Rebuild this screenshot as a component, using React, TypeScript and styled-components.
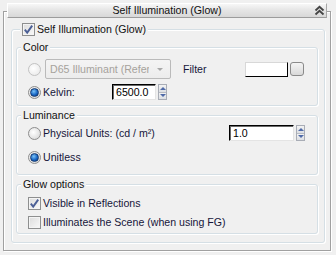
import styled, { createGlobalStyle } from "styled-components";

const GlobalStyle = createGlobalStyle`
  html, body {
    margin: 0;
    padding: 0;
    background: #f0f0f0;
  }
  body {
    font-family: "Liberation Sans", Arial, sans-serif;
    font-size: 10.6px;
    color: #16163a;
  }
  * {
    box-sizing: border-box;
  }
`;

const Page = styled.div`
  width: 336px;
  height: 255px;
  padding-top: 3px;
  overflow: hidden;
  background: #f0f0f0;
`;

const TitleBar = styled.div`
  position: relative;
  z-index: 1;
  height: 15px;
  margin: 0 9px 0 7px;
  display: grid;
  grid-template-columns: 1fr auto 1fr;
  align-items: center;
  background: linear-gradient(#f7f7f7, #e6e6e6 45%, #d8d8d8);
  border: 1px solid;
  border-color: #ffffff #a8a8a8 #9c9c9c #ffffff;
  line-height: 13px;
  color: #111;
`;

const TitleText = styled.span`
  grid-column: 2;
`;

const Chevron = styled.svg`
  grid-column: 3;
  justify-self: end;
  margin-right: 1px;
`;

const Frame = styled.div`
  margin: -7px 5px 0 3px;
  border: 1px solid #a0a0a0;
  box-shadow: inset 1px 1px 0 #ffffff, 1px 1px 0 #ffffff;
  padding: 11px 5px 7px 7px;
`;

const GroupBox = styled.fieldset<{ $pad: string }>`
  margin: 0;
  min-width: 0;
  border: 1px solid #d5dfe5;
  border-radius: 3px;
  box-shadow: inset 1px 1px 0 #ffffff, 1px 1px 0 #ffffff;
  padding: ${(p) => p.$pad};
`;

const Legend = styled.legend<{ $offset: number }>`
  margin-left: ${(p) => p.$offset}px;
  padding: 0 2px;
  height: 13px;
  line-height: 13px;
  display: flex;
  align-items: center;
  background: #f0f0f0;
  color: #111;
`;

const Stack = styled.div`
  display: flex;
  flex-direction: column;
  gap: 3px;
`;

const Rows = styled.div<{ $gap: number }>`
  display: flex;
  flex-direction: column;
  gap: ${(p) => p.$gap}px;
`;

const Row = styled.div<{ $h: number }>`
  display: flex;
  align-items: center;
  height: ${(p) => p.$h}px;
`;

const Label = styled.span<{ $w?: number }>`
  margin-left: 2px;
  white-space: nowrap;
  line-height: 13px;
  ${(p) => (p.$w ? `width: ${p.$w}px; flex: none;` : "flex: 1;")}
`;

const FilterLabel = styled.span`
  margin-left: 12px;
  line-height: 13px;
`;

const Spacer = styled.span`
  flex: 1;
`;

const CheckBox = styled.span`
  width: 13px;
  height: 13px;
  flex: none;
  border: 1px solid #8e8f8f;
  background: linear-gradient(135deg, #dcdcdc, #f9f9f9);
  box-shadow: inset 0 0 0 1px #f4f4f4;
  display: flex;
  align-items: center;
  justify-content: center;
`;

const Radio = styled.span<{ $on?: boolean; $disabled?: boolean }>`
  width: 13px;
  height: 13px;
  flex: none;
  border-radius: 50%;
  border: 1px solid ${(p) => (p.$disabled ? "#c2c2c2" : "#8d8d8d")};
  background: ${(p) =>
    p.$disabled
      ? "radial-gradient(circle at 40% 40%, #ffffff, #e6e6e6)"
      : "radial-gradient(circle at 40% 40%, #ffffff, #d2d2d2)"};
  display: flex;
  align-items: center;
  justify-content: center;

  &::after {
    content: "";
    display: ${(p) => (p.$on ? "block" : "none")};
    width: 7px;
    height: 7px;
    border-radius: 50%;
    border: 1px solid #163a70;
    background: radial-gradient(circle at 40% 35%, #7cc4f8, #1866c4 55%, #0b3a80);
  }
`;

const Dropdown = styled.div`
  width: 126px;
  height: 20px;
  margin-left: 4px;
  border: 1px solid #bababa;
  border-radius: 2px;
  background: linear-gradient(#f4f4f4, #ececec);
  display: flex;
  align-items: center;
  color: #a6a29c;
  flex: none;
`;

const DropText = styled.span`
  width: 103px;
  padding-left: 4px;
  overflow: hidden;
  white-space: nowrap;
`;

const DropArrow = styled.span`
  margin-left: 8px;
  width: 0;
  height: 0;
  border-left: 3px solid transparent;
  border-right: 3px solid transparent;
  border-top: 3px solid #a8a8a8;
`;

const NumInput = styled.div<{ $w: number }>`
  width: ${(p) => p.$w}px;
  height: 16px;
  flex: none;
  background: #ffffff;
  border: 1px solid;
  border-color: #000000 #e4e4e4 #e4e4e4 #000000;
  box-shadow: inset 1px 1px 0 #6a6a6a;
  padding: 1px 0 0 3px;
  line-height: 13px;
  color: #000;
`;

const Spinner = styled.div`
  width: 9px;
  height: 16px;
  margin-left: 2px;
  flex: none;
  border: 1px solid #a9adb6;
  display: flex;
  flex-direction: column;
`;

const SpinHalf = styled.div<{ $down?: boolean }>`
  flex: 1;
  display: flex;
  align-items: center;
  justify-content: center;
  background: linear-gradient(#f2f2f2, #dcdfe4);
  border-top: ${(p) => (p.$down ? "1px solid #b8bcc4" : "none")};

  &::after {
    content: "";
    width: 0;
    height: 0;
    border-left: 3px solid transparent;
    border-right: 3px solid transparent;
    ${(p) =>
      p.$down ? "border-top: 3px solid #4f6aa8;" : "border-bottom: 3px solid #4f6aa8;"}
  }
`;

const Swatch = styled.div`
  width: 43px;
  height: 15px;
  flex: none;
  background: #ffffff;
  border: 1px solid;
  border-color: #d8d8d8 #000000 #000000 #d8d8d8;
`;

const SmallButton = styled.div`
  width: 14px;
  height: 14px;
  margin-left: 2px;
  flex: none;
  border: 1px solid #8a8a8a;
  border-radius: 3px;
  background: linear-gradient(#f4f4f4, #d9d9d9);
`;

function Check({ checked }: { checked?: boolean }) {
  return (
    <CheckBox>
      {checked && (
        <svg width="11" height="11" viewBox="0 0 11 11">
          <path d="M1.8 5.6 L4.2 8.6 L9.2 1.6" fill="none" stroke="#4b5f96" strokeWidth="1.9" />
        </svg>
      )}
    </CheckBox>
  );
}

function Spin() {
  return (
    <Spinner>
      <SpinHalf />
      <SpinHalf $down />
    </Spinner>
  );
}

export default function App() {
  return (
    <Page>
      <GlobalStyle />
      <TitleBar>
        <TitleText>Self Illumination (Glow)</TitleText>
        <Chevron width="11" height="11" viewBox="0 0 11 11">
          <path d="M1.5 5.5 L5.5 1.8 L9.5 5.5 M1.5 9.5 L5.5 5.8 L9.5 9.5" fill="none" stroke="#444" strokeWidth="1.8" />
        </Chevron>
      </TitleBar>

      <Frame>
        <GroupBox $pad="5px 6px 8px 4px">
          <Legend $offset={4}>
            <Check checked />
            <Label>Self Illumination (Glow)</Label>
          </Legend>

          <Stack>
            <GroupBox $pad="5px 13px 5px 11px">
              <Legend $offset={-7}>Color</Legend>
              <Rows $gap={5}>
                <Row $h={20}>
                  <Radio $disabled />
                  <Dropdown>
                    <DropText>D65 Illuminant (Refer</DropText>
                    <DropArrow />
                  </Dropdown>
                  <FilterLabel>Filter</FilterLabel>
                  <Spacer />
                  <Swatch />
                  <SmallButton />
                </Row>
                <Row $h={16}>
                  <Radio $on />
                  <Label $w={69}>Kelvin:</Label>
                  <NumInput $w={44}>6500.0</NumInput>
                  <Spin />
                </Row>
              </Rows>
            </GroupBox>

            <GroupBox $pad="3px 12px 9px 11px">
              <Legend $offset={-7}>Luminance</Legend>
              <Rows $gap={8}>
                <Row $h={16}>
                  <Radio />
                  <Label>Physical Units: (cd / m²)</Label>
                  <NumInput $w={65}>1.0</NumInput>
                  <Spin />
                </Row>
                <Row $h={16}>
                  <Radio $on />
                  <Label>Unitless</Label>
                </Row>
              </Rows>
            </GroupBox>

            <GroupBox $pad="4px 12px 3px 11px">
              <Legend $offset={-7}>Glow options</Legend>
              <Rows $gap={3}>
                <Row $h={16}>
                  <Check checked />
                  <Label>Visible in Reflections</Label>
                </Row>
                <Row $h={16}>
                  <Check />
                  <Label>Illuminates the Scene (when using FG)</Label>
                </Row>
              </Rows>
            </GroupBox>
          </Stack>
        </GroupBox>
      </Frame>
    </Page>
  );
}
